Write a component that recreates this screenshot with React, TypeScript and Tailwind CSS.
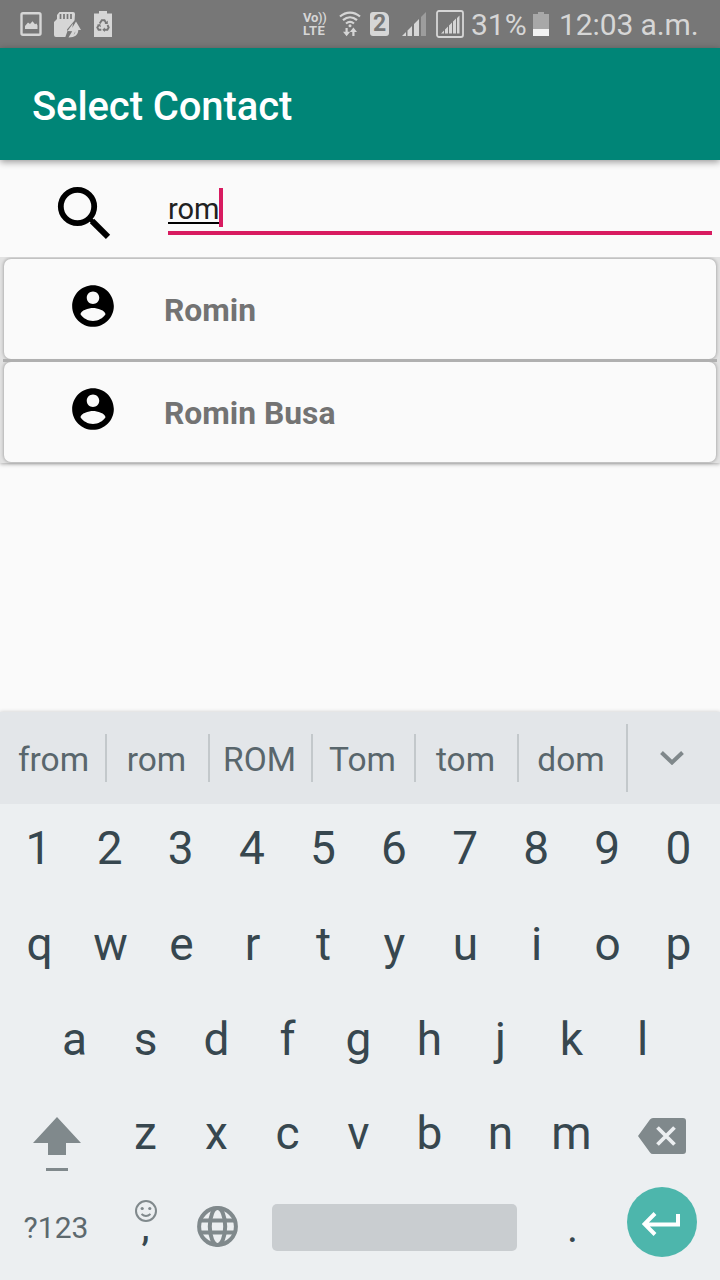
import React from "react";

const topRows = [
  { keys: "1234567890", className: "flex h-[89px] pl-[3px] pr-[6px] pb-px" },
  { keys: "qwertyuiop", className: "flex h-[96px] pl-[4px] pr-[6px] pt-[6px]" },
  { keys: "asdfghjkl", className: "flex h-[95px] pl-[39px] pr-[42px] pt-[4px]" },
];

const suggestions = ["from", "rom", "ROM", "Tom", "tom", "dom"];

function Key({ label }: { label: string }) {
  return (
    <div className="flex flex-1 items-center justify-center text-[46px] leading-[54px] text-[#37474f]">
      {label}
    </div>
  );
}

function StatusBar() {
  return (
    <div className="flex h-12 shrink-0 items-center bg-[#777777] text-[#d6d6d6]">
      <svg className="ml-5 h-6 w-[22px] shrink-0" viewBox="0 0 22 24">
        <rect x="1.500" y="1.200" width="19" height="21.600" rx="1.500" fill="none" stroke="#d6d6d6" strokeWidth="2.400" />
        <path d="M5 17v-3l3-3.600 2 1.600 2.500-2.800 2.500 3 1.500-.6 1 2v3.400z" fill="#d6d6d6" />
      </svg>
      <svg className="ml-3 h-[27px] w-[27px] shrink-0" viewBox="0 0 27 27">
        <path d="M5.500 1H19a2 2 0 0 1 2 2l-.5 7.500L25 18v8H2a2 2 0 0 1-2-2V11l3-3V4z" fill="#d6d6d6" />
        <path d="M6.500 3v5M10 3v5M13.500 3v5M17 3v5" stroke="#777777" strokeWidth="1.700" />
        <path d="M20.500 9.500l-7.500 9 .5 1.500-2.500 7H28V9.500z" fill="#777777" />
        <path d="M22 10.500l5 8.500h-2.700c0 4.500-3 7.500-9.800 7.500l3.700-6.200-4.700-.3L19 12.500l-1 6 4.500-.5-3 6c2-1.500 1.800-3 1.800-5H17z" fill="#d6d6d6" />
      </svg>
      <svg className="ml-[13px] h-[26px] w-[18px] shrink-0" viewBox="0 0 18 26">
        <path d="M0 2.500h5V0h8v2.500h5V26H0z" fill="#d6d6d6" />
        <g fill="none" stroke="#777777" strokeWidth="1.900">
          <path d="M5.700 12.500l2.100-3.200h2.700l1.800 3M13.500 14l1.200 2.500-1.300 2.300H9.800M7.300 18.800H4.600l-1.300-2.300 1.500-2.500" />
        </g>
        <path d="M10.500 12.900h3.300v-3.300zM10.800 16.400v4.600l-2.500-2.300zM3 13.700l3.200-.6.800 3.200z" fill="#777777" />
      </svg>
      <div className="ml-[191px] flex w-[26px] shrink-0 flex-col text-[13px] font-bold leading-[13px]">
        <span className="whitespace-nowrap tracking-[-0.3px]">
          Vo<span className="font-medium">))</span>
        </span>
        <span className="tracking-[0.4px]">LTE</span>
      </div>
      <svg className="ml-[10px] h-[26px] w-[22px] shrink-0" viewBox="0 0 22 26" fill="none" stroke="#d6d6d6" strokeWidth="2.200">
        <path d="M1 5.500c6-5.300 14-5.300 20 0M4 9.200c4.300-3.700 9.700-3.700 14 0M7 12.500c2.500-2 5.500-2 8 0" />
        <circle cx="11" cy="14.800" r="1.500" fill="#d6d6d6" stroke="none" />
        <path d="M7.600 17v5M14.400 25v-5" />
        <path d="M4 20.800h7.200l-3.600 4.400zM10.800 21h7.200l-3.600-4.400z" fill="#d6d6d6" stroke="none" />
      </svg>
      <div className="ml-[9px] flex h-6 w-[19px] shrink-0 items-center justify-center rounded-[3px] rounded-tr-[6px] bg-[#d6d6d6] text-[23px] font-bold leading-6 text-[#777777]">
        2
      </div>
      <svg className="ml-[13px] h-6 w-6 shrink-0" viewBox="0 0 24 24">
        <path d="M0 24l4-4v4zM5.500 24v-5.500L10 14v10zM12 24V12l5-5v17z" fill="#d6d6d6" />
        <path d="M19 24V5l5-5v24z" fill="#9d9d9d" />
      </svg>
      <svg className="ml-[10px] h-7 w-7 shrink-0" viewBox="0 0 28 28">
        <rect x="1" y="1" width="26" height="26" rx="2" fill="none" stroke="#d6d6d6" strokeWidth="1.800" />
        <path d="M5 23.500l3-3v3zM9 23.500v-4l3-3v7zM13 23.500v-8l3-3v11zM17 23.500v-12l3-3v15zM21 23.500V8l2.500-2.500v18z" fill="#d6d6d6" />
      </svg>
      <span className="ml-[7px] w-[56px] shrink-0 whitespace-nowrap pt-px text-[30px] leading-9">31%</span>
      <svg className="ml-[6px] h-6 w-4 shrink-0" viewBox="0 0 16 24">
        <path d="M0 2h5V0h6v2h5v15H0z" fill="#a8a8a8" />
        <path d="M0 17h16v7H0z" fill="#f2f2f2" />
      </svg>
      <span className="ml-[10px] whitespace-nowrap pt-px text-[30px] leading-9 tracking-[-0.1px]">12:03 a.m.</span>
    </div>
  );
}

function ContactCard({ name }: { name: string }) {
  return (
    <div className="flex h-[100px] shrink-0 items-center rounded-[7px] bg-[#fafafa] pl-[64px] shadow-[0_0_3px_1px_rgba(0,0,0,0.22)]">
      <svg className="-mt-[7px] h-[50px] w-[50px] shrink-0" viewBox="0 0 24 24">
        <path d="M12 2C6.480 2 2 6.480 2 12s4.480 10 10 10 10-4.480 10-10S17.520 2 12 2zm0 3c1.660 0 3 1.340 3 3s-1.340 3-3 3-3-1.340-3-3 1.340-3 3-3zm0 14.200c-2.500 0-4.710-1.280-6-3.220.03-1.990 4-3.080 6-3.080 1.990 0 5.970 1.090 6 3.080-1.290 1.940-3.500 3.220-6 3.220z" />
      </svg>
      <span className="ml-[46px] pt-[2px] text-[31.8px] font-bold leading-[38px] text-[#737373]">{name}</span>
    </div>
  );
}

export default function App() {
  return (
    <div className="flex h-[1280px] w-[720px] flex-col overflow-hidden bg-[#fafafa] font-[Roboto,sans-serif]">
      <StatusBar />
      <header className="z-10 flex h-28 shrink-0 items-center bg-[#008577] pl-8 pt-[5px] text-[40px] font-medium leading-[48px] tracking-[-0.1px] text-white shadow-[0_2px_7px_rgba(0,0,0,0.4)]">
        Select Contact
      </header>
      <div className="flex h-[97px] shrink-0">
        <svg className="ml-[57px] mt-[26px] h-[54px] w-[54px] shrink-0" viewBox="0 0 54 54" fill="none" stroke="#000">
          <circle cx="20.500" cy="20.500" r="16.700" strokeWidth="5.800" />
          <path d="M35 35L51 50.800" strokeWidth="6" />
          <path d="M32 32l5 5" strokeWidth="4" />
        </svg>
        <div className="ml-[57px] mt-[27px] flex h-12 w-[544px] border-b-4 border-[#d81b60]">
          <span className="mt-[8px] h-[29px] w-[51px] border-b-2 border-black text-[29px] leading-[29px] text-[#212121]">
            rom
          </span>
          <span className="mt-[1px] h-[39px] w-1 bg-[#d81b60]" />
        </div>
      </div>
      <div className="flex h-[214px] shrink-0 flex-col overflow-hidden">
        <div className="flex h-[206px] shrink-0 flex-col bg-[#e2e2e2] pt-[2px] [box-shadow:0_1px_4px_rgba(0,0,0,0.35)]">
          <div className="px-1">
            <ContactCard name="Romin" />
          </div>
          <div className="z-10 mx-[3px] h-[3px] shrink-0 bg-[#b0b0b0]" />
          <div className="px-1">
            <ContactCard name="Romin Busa" />
          </div>
        </div>
      </div>
      <div className="flex-1" />
      <section className="h-[568px] shrink-0 bg-[#eceff1] shadow-[0_0_4px_rgba(0,0,0,0.2)]">
        <div className="flex h-[92px] items-center bg-[#e3e6e9] pl-[4px] text-[33.5px] leading-10 text-[#59666c]">
          {suggestions.map((word, i) => (
            <div
              key={word}
              className={
                i === suggestions.length - 1
                  ? "flex h-[68px] w-[109px] items-center justify-center border-r-2 border-[#c3c8cb] pr-[3px] pt-[3px]"
                  : "flex h-12 w-[103px] items-center justify-center border-r-2 border-[#c3c8cb] pt-[3px] pr-[2px]"
              }
            >
              {word}
            </div>
          ))}
          <svg className="ml-[32px] h-[14px] w-6" viewBox="0 0 24 14" fill="none" stroke="#80888b" strokeWidth="4">
            <path d="M1.500 1.500L12 11.500l10.500-10" />
          </svg>
        </div>
        {topRows.map((row) => (
          <div key={row.keys} className={row.className}>
            {row.keys.split("").map((key) => (
              <Key key={key} label={key} />
            ))}
          </div>
        ))}
        <div className="flex h-[95px] items-center">
          <div className="flex w-[110px] flex-col items-center pl-[4px] pt-[25px]">
            <svg className="h-[54px] w-12" viewBox="0 0 48 54" fill="#80898c">
              <path d="M24 0l24 26H33v12H15V26H0zM13 51h22v3H13z" />
            </svg>
          </div>
          <div className="flex w-[497px] pt-[3px]">
            {"zxcvbnm".split("").map((key) => (
              <Key key={key} label={key} />
            ))}
          </div>
          <svg className="ml-[31px] mt-[9px] h-9 w-12 shrink-0" viewBox="0 0 48 36">
            <path d="M15 0h30a3 3 0 0 1 3 3v30a3 3 0 0 1-3 3H15q-2 0-3-1.500L0 18 12 1.500Q13 0 15 0z" fill="#80898c" />
            <path d="M19.500 9.500l17 17m0-17l-17 17" stroke="#eceff1" strokeWidth="3.800" />
          </svg>
        </div>
        <div className="flex h-[101px] items-center pb-[4px]">
          <span className="w-[112px] text-center text-[30px] leading-9 text-[#5d696e]">?123</span>
          <div className="flex w-[67px] flex-col items-center">
            <svg className="h-[22px] w-[22px]" viewBox="0 0 22 22" fill="none" stroke="#80898c" strokeWidth="2">
              <circle cx="11" cy="11" r="10" />
              <path d="M6.500 14q4.500 4 9 0" />
              <circle cx="7.200" cy="8.500" r="1.600" fill="#80898c" stroke="none" />
              <circle cx="14.800" cy="8.500" r="1.600" fill="#80898c" stroke="none" />
            </svg>
            <span className="h-[33px] text-[36px] font-medium leading-[12px] text-[#37474f]">,</span>
          </div>
          <svg className="-mt-[2px] ml-[18px] h-[41px] w-[41px]" viewBox="0 0 41 41" fill="none" stroke="#80898c" strokeWidth="4">
            <circle cx="20.500" cy="20.500" r="18.400" />
            <ellipse cx="20.500" cy="20.500" rx="7.700" ry="18.400" />
            <path d="M3 14.500h35M3 26.500h35" />
          </svg>
          <div className="ml-[34px] h-[47px] w-[245px] rounded-[5px] bg-[#c9cdd0]" />
          <span className="w-[111px] text-center text-[42px] leading-[48px] text-[#37474f]">.</span>
          <div className="-ml-px -mt-[11px] flex h-[70px] w-[70px] items-center justify-center rounded-full bg-[#4db6ac] pr-[2px] pt-[3px]">
            <svg className="h-6 w-[38px]" viewBox="0 0 38 24" fill="none" stroke="#fff" strokeWidth="4">
              <path d="M13 1.500L2.500 12 13 22.500M2.500 12.500h33.500V2" />
            </svg>
          </div>
        </div>
      </section>
    </div>
  );
}
